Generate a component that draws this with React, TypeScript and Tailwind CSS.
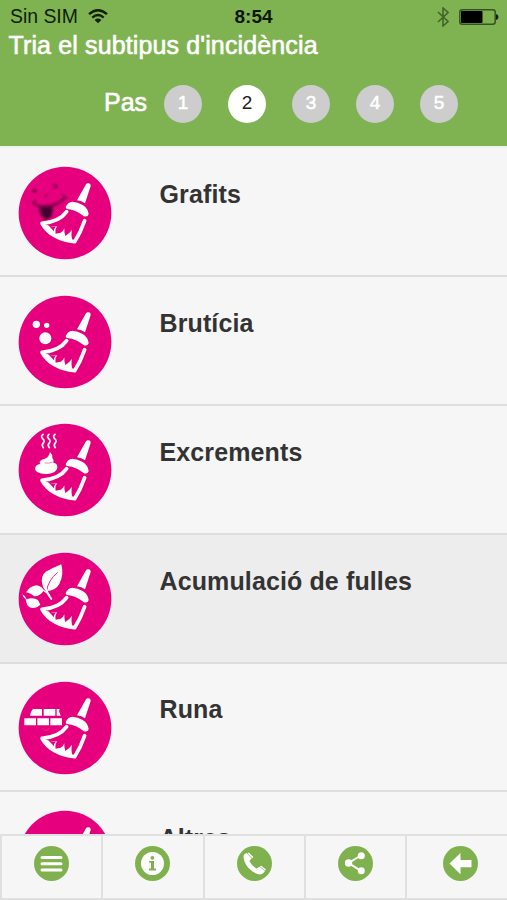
import React from "react";

const PINK = "#e6007e";

function Broom() {
  return (
    <g>
      <path d="M228 71 Q231 66 237 68 Q243 70 242 76 L225 128 Q215 121 201 119Z" fill="#fff" />
      <path d="M167 139 Q173 124 187 123 Q203 124 218 133 Q234 143 236 160 Q234 170 222 167 Q212 158 196 151 Q182 145 173 146 Q167 144 167 139Z" fill="#fff" />
      <path
        d="M170 153 Q148 184 96 188 C113 219 150 240 194 243 Q212 215 224 180"
        fill="none"
        stroke="#fff"
        strokeWidth="11"
        strokeLinecap="round"
        strokeLinejoin="round"
      />
      <path d="M98 188 Q122 200 142 197 Q134 206 137 219 L152 216 Q160 212 163 203 Q162 216 166 226 Q178 219 186 207 Q182 222 188 242 Q130 232 98 188Z" fill="#fff" />
      <path d="M115 194 Q126 199 137 198 Q131 204 132 212Z" fill={PINK} />
    </g>
  );
}

function Graffiti() {
  return (
    <g>
      <defs>
        <filter id="spray" x="-30%" y="-30%" width="160%" height="160%">
          <feGaussianBlur stdDeviation="3.5" />
        </filter>
      </defs>
      <g filter="url(#spray)" stroke="#7d0549" fill="none" strokeLinecap="round">
        <circle cx="74" cy="90" r="6" fill="#8a064d" strokeWidth="1" />
        <circle cx="136" cy="77" r="6" fill="#8a064d" strokeWidth="1" />
        <path d="M72 127 Q82 139 104 137 Q143 137 165 110" strokeWidth="8" />
        <path d="M68 126 L77 119 M155 101 L170 112 M106 106 L113 102" strokeWidth="4" />
        <path d="M88 140 L128 138 Q129 171 110 176 Q92 173 88 140Z" fill="#42042d" strokeWidth="4" />
      </g>
    </g>
  );
}

function Dirt() {
  return (
    <g fill="#fff">
      <circle cx="79" cy="104" r="11" />
      <circle cx="110" cy="107" r="8" />
      <circle cx="106" cy="146" r="18" />
    </g>
  );
}

function Droppings() {
  return (
    <g fill="#fff">
      <path d="M120 103 Q128 110 127 121 Q134 128 130 135 Q143 137 142 150 Q139 165 117 168 Q97 171 81 163 Q70 154 80 143 Q88 139 91 139 Q85 131 96 126 Q110 123 115 115 Q119 109 120 103Z" />
      <path d="M104 136 Q118 138 128 133" stroke={PINK} strokeWidth="1.5" fill="none" />
      <path
        d="M99 50 Q91 56 98 63 Q106 70 99 77 Q94 82 100 90 M117 50 Q109 56 116 63 Q124 70 117 77 Q112 82 118 90 M135 50 Q127 56 134 63 Q142 70 135 77 Q130 82 136 90"
        fill="none"
        stroke="#fff"
        strokeWidth="5"
        strokeLinecap="round"
      />
    </g>
  );
}

function Leaves() {
  return (
    <g fill="#fff">
      <path d="M154 53 Q128 64 107 75 Q91 88 97 113 Q98 126 110 133 Q136 133 148 112 Q162 86 154 53Z" />
      <path d="M143 77 Q114 101 110 133" stroke={PINK} strokeWidth="2.5" fill="none" />
      <path d="M107 126 Q114 144 124 157" stroke="#fff" strokeWidth="6" strokeLinecap="round" fill="none" />
      <path d="M48 137 Q60 118 80 116 Q96 119 101 132 Q91 148 73 149 Q61 139 48 137Z" />
      <path d="M37 143 Q47 148 50 158 Q69 150 84 160 L91 174 L82 181 Q61 189 52 175 Q48 166 47 157 Q38 152 37 143Z" />
      <path d="M98 129 L119 145" stroke="#fff" strokeWidth="4" />
    </g>
  );
}

function Bricks() {
  return (
    <g fill="#fff">
      <path d="M69 100 L96 100 L96 120 L60 120 L63 108Z M101 100 H136 V120 H101Z M140 100 L149 100 L147 106 L152 120 H140Z" />
      <path d="M43 128 H78 V149 H43Z M82 128 H117 V149 H82Z M121 128 H156 V149 H121Z" />
      <path d="M96 156 Q106 172 121 156" stroke="#f0308c" strokeWidth="2.5" fill="none" />
    </g>
  );
}

const rows: { label: string; art: React.ReactNode; active?: boolean }[] = [
  { label: "Grafits", art: <Graffiti /> },
  { label: "Brutícia", art: <Dirt /> },
  { label: "Excrements", art: <Droppings /> },
  { label: "Acumulació de fulles", art: <Leaves />, active: true },
  { label: "Runa", art: <Bricks /> },
  { label: "Altres", art: null },
];

function Row({ label, art, active }: { label: string; art: React.ReactNode; active?: boolean }) {
  return (
    <li className={`flex h-[128.8px] shrink-0 items-start border-b-2 border-[#dedede] pl-[18px] pt-[17.4px] ${active ? "bg-[#ededed]" : "bg-[#f6f6f6]"}`}>
      <svg className="size-[94px] shrink-0" viewBox="24 16 282 282" fill="none">
        <circle cx="165" cy="157" r="139" fill={PINK} />
        {art}
        <Broom />
      </svg>
      <span className="ml-[47.5px] mt-[14.4px] whitespace-nowrap text-[25px] leading-[29px] font-bold tracking-[0.12px] text-[#333]">{label}</span>
    </li>
  );
}

function StatusBar() {
  return (
    <div className="grid h-[34px] grid-cols-3 items-center pl-[10px] pr-[8px] text-[19.4px] text-[#10200a]">
      <div className="flex items-center gap-[10px]">
        <span className="whitespace-nowrap">Sin SIM</span>
        <svg className="h-[15px] w-[20px]" viewBox="0 0 20 15" fill="none" stroke="#10200a" strokeWidth="2.4">
          <path d="M1 5.2 Q10 -2.6 19 5.2 M4.3 8.6 Q10 3.6 15.7 8.6" />
          <path d="M6.6 10.9 Q10 8.2 13.4 10.9 L10 14.3Z" fill="#10200a" stroke="none" />
        </svg>
      </div>
      <span className="-ml-[2px] text-center text-[19px] font-bold text-[#0b1606]">8:54</span>
      <div className="flex items-center justify-end gap-[10px]">
        <svg className="h-[20px] w-[12px]" viewBox="0 0 12 20" fill="none" stroke="#41662a" strokeWidth="1.6">
          <path d="M1 5 L11 14.5 L6 19 V1 L11 5.5 L1 15" />
        </svg>
        <svg className="h-[16px] w-[40px]" viewBox="0 0 40 16" fill="none">
          <rect x="0.8" y="0.8" width="35.4" height="14.4" rx="2.5" stroke="#35541f" strokeWidth="1.5" />
          <rect x="2" y="2" width="21.5" height="12" rx="1" fill="#000" />
          <path d="M37 5 Q39.5 5.5 39.5 8 Q39.5 10.5 37 11Z" fill="#10200a" />
        </svg>
      </div>
    </div>
  );
}

const footerIcons = [
  <path key="menu" d="M8 11.5H27 M8 17.7H27 M8 23.9H27" stroke="#fff" strokeWidth="3" strokeLinecap="round" />,
  <g key="info">
    <circle cx="17.5" cy="17.5" r="11.5" fill="#fff" />
    <circle cx="17.4" cy="11.8" r="1.9" fill="#7fb24f" />
    <path d="M14.2 15H19V22.6H21V24.4H14V22.6H16V16.8H14.2Z" fill="#7fb24f" />
  </g>,
  <g key="phone" fill="#fff">
    <path d="M6.5 10 Q7 7.5 9.7 7 L14.6 12.6 L12.3 15 Q14.5 19.5 19.5 22.6 L22.5 20.8 L28 25 Q26 28.4 22.5 28.6 Q16.5 27.5 11.3 21.8 Q6.5 16 6.5 10Z" />
    <path d="M11.2 7 L15.8 11.6 M23.5 20 L28.5 24" stroke="#fff" strokeWidth="1.5" />
  </g>,
  <g key="share">
    <path d="M23 9.5 L10.5 17 L23 24.8" stroke="#fff" strokeWidth="2" />
    <circle cx="23.3" cy="9.7" r="3.5" fill="#fff" />
    <circle cx="10.5" cy="17" r="3.7" fill="#fff" />
    <circle cx="23.3" cy="24.7" r="3.5" fill="#fff" />
  </g>,
  <path key="back" d="M6.5 17.5 L17.5 7 V14 H28.5 V21.2 H17.5 V28.2Z" fill="#fff" />,
];

export default function App() {
  return (
    <div className="flex h-[900px] w-[507px] flex-col overflow-hidden bg-[#f6f6f6] font-['Liberation_Sans',Arial,sans-serif]">
      <header className="h-[146.4px] shrink-0 bg-[#7fb352]">
        <StatusBar />
        <h1 className="pl-[8.5px] text-[25px] leading-[22px] tracking-[0.13px] whitespace-nowrap text-white [-webkit-text-stroke:0.6px_white]">Tria el subtipus d'incidència</h1>
        <div className="mt-[28.5px] flex items-center pl-[104px]">
          <span className="w-[60px] pb-[3px] text-[25px] leading-[35px] text-white [-webkit-text-stroke:0.6px_white]">Pas</span>
          <ol className="flex gap-[26px]">
            {[1, 2, 3, 4, 5].map((n) => (
              <li
                key={n}
                className={`flex size-[38px] items-center justify-center rounded-full text-[19px] ${n === 2 ? "bg-white text-[#222]" : "bg-[#cdcdcd] text-white [-webkit-text-stroke:0.5px_white]"}`}
              >
                {n}
              </li>
            ))}
          </ol>
        </div>
      </header>
      <ul className="flex min-h-0 flex-1 flex-col overflow-hidden border-t-2 border-[#eff2ec]">
        {rows.map((r) => (
          <Row key={r.label} {...r} />
        ))}
      </ul>
      <nav className="flex h-[66.5px] shrink-0 border-y-2 border-l-2 border-[#e0e0e0] bg-[#f6f6f6]">
        {footerIcons.map((icon, i) => (
          <div key={i} className={`flex justify-center pt-[10.5px] ${i < 4 ? "w-[101.3px] border-r-2 border-[#e0e0e0]" : "flex-1 pl-[7px]"}`}>
            <svg className="size-[35px]" viewBox="0 0 35 35" fill="none">
              <circle cx="17.5" cy="17.5" r="17.5" fill="#7fb24f" />
              {icon}
            </svg>
          </div>
        ))}
      </nav>
    </div>
  );
}
